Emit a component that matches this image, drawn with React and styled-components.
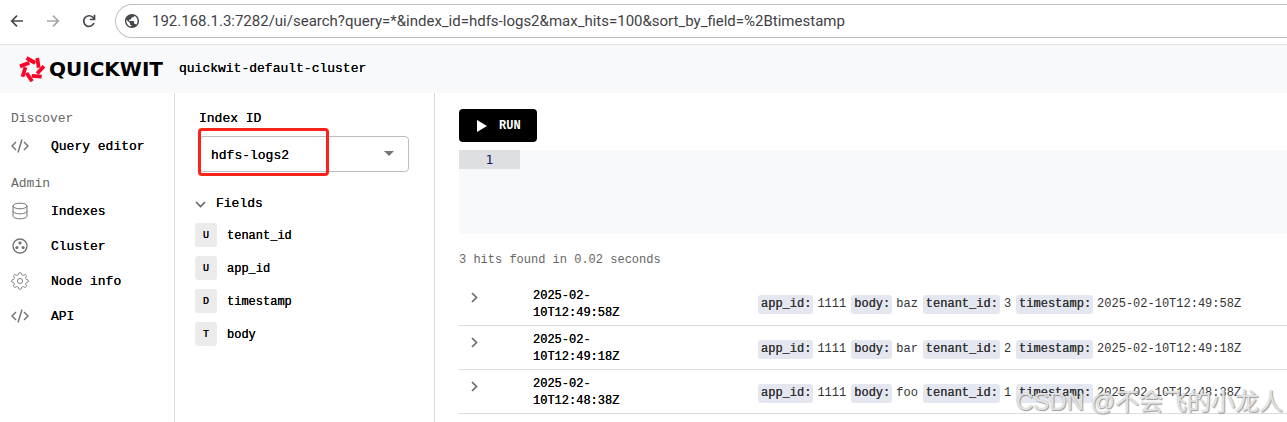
import React from 'react';
import styled, { createGlobalStyle } from 'styled-components';

const Global = createGlobalStyle`
  *, *::before, *::after { box-sizing: border-box; }
  html { overflow: hidden; }
  body {
    margin: 0;
    background: #fff;
    color: #000;
    font: 13px/24px "Liberation Mono", monospace;
  }
  button, select, textarea { font: inherit; color: inherit; border: 0; margin: 0; }
  ul, dl, dd, h2 { margin: 0; padding: 0; font: inherit; list-style: none; }
  a { color: inherit; text-decoration: none; }
  svg { display: block; flex: none; }
`;

const Page = styled.div`
  position: relative;
  display: flex;
  flex-direction: column;
  min-height: 100vh;
  overflow: hidden;
`;

const BrowserBar = styled.div`
  display: flex;
  align-items: center;
  padding: 4px 0 6px 8px;
  border-bottom: 1px solid #dfe1dd;
`;

const NavButton = styled.button`
  width: 18px;
  height: 18px;
  padding: 0;
  background: none;
  && {
    margin-right: 18px;
    color: ${(p) => (p.$dim ? '#a5a8ab' : '#45484c')};
  }
`;

const AddressBox = styled.div`
  flex: 1;
  display: flex;
  align-items: center;
  gap: 13px;
  height: 34px;
  margin-left: -1px;
  padding-left: 9px;
  border: 1px solid #bfc1c3;
  border-right: 0;
  border-radius: 17px 0 0 17px;
`;

const Address = styled.input`
  flex: 1;
  min-width: 0;
  padding: 0;
  border: 0;
  background: none;
  color: #3f4246;
  font: 15px/20px Roboto, sans-serif;
`;

const Header = styled.header`
  display: flex;
  align-items: center;
  height: 48px;
  padding-left: 18px;
  background: #f8f9fb;
`;

const Brand = styled.a`
  display: flex;
  align-items: center;
  gap: 4px;
  font: 700 20px/24px "DejaVu Sans", sans-serif;
`;

const Medium = styled.span`
  text-shadow: 0 0 0 currentColor;
`;

const Cluster = styled(Medium)`
  margin-left: 16px;
`;

const Body = styled.div`
  flex: 1;
  display: flex;
`;

const Sidebar = styled.nav`
  flex: none;
  width: 175px;
  padding: 14px 0 0 11px;
  border-right: 1px solid #dcdcdc;
`;

const NavGroup = styled.section`
  margin-bottom: 8px;
`;

const NavTitle = styled.h2`
  height: 22px;
  color: #666;
`;

const NavItem = styled.a`
  display: flex;
  align-items: center;
  gap: 22px;
  height: 35px;
  svg { color: #757575; margin-bottom: 2px; }
`;

const FieldPanel = styled.aside`
  flex: none;
  width: 260px;
  padding: 14px 25px 0 20px;
  border-right: 1px solid #dcdcdc;
`;

const IndexPicker = styled.div`
  position: relative;
  display: flex;
  flex-direction: column;
  gap: 5px;
  padding-left: 4px;
`;

const IndexSelect = styled.select`
  width: 100%;
  height: 36px;
  appearance: none;
  background: #fff;
  text-shadow: 0 0 0 currentColor;
  && {
    padding: 3px 0 0 11px;
    border: 1px solid #bdbdbd;
  }
  border-radius: 4px;
`;

const SelectArrow = styled.svg`
  position: absolute;
  right: 15px;
  bottom: 16px;
  pointer-events: none;
`;

const Highlight = styled.div`
  position: absolute;
  left: 3px;
  bottom: -4px;
  width: 131px;
  height: 48px;
  border: 3px solid #fa2319;
  border-radius: 4px;
  pointer-events: none;
`;

const FieldsToggle = styled.button`
  display: flex;
  align-items: center;
  gap: 10px;
  padding: 0;
  background: none;
  text-shadow: 0 0 0 currentColor;
  && { margin: 20px 0 7px; }
`;

const FieldList = styled.ul`
  display: flex;
  flex-direction: column;
  gap: 9px;
`;

const Field = styled.li`
  display: flex;
  align-items: flex-start;
  gap: 10px;
  height: 24px;
  font-size: 12px;
  line-height: 26px;
`;

const TypeBadge = styled.span`
  width: 22px;
  height: 24px;
  border-radius: 3px;
  background: #ebebeb;
  font-size: 10px;
  text-align: center;
  text-shadow: 0 0 0 currentColor;
`;

const Main = styled.main`
  flex: 1;
  min-width: 0;
  padding: 16px 0 0 24px;
`;

const RunButton = styled.button`
  display: flex;
  align-items: center;
  gap: 12px;
  height: 33px;
  padding: 1px 16px 0 18px;
  border-radius: 4px;
  && { background: #000; color: #fff; font: 700 12px/20px "Liberation Mono", monospace; }
`;

const Editor = styled.div`
  display: flex;
  height: 84px;
  margin: 8px 0 17px;
  background: #f8f9fb;
`;

const Gutter = styled.div`
  width: 61px;
  height: 19px;
  background: #dedfe1;
  color: #0b216f;
  font: 13px/19px "DejaVu Sans Mono", monospace;
  text-align: center;
`;

const QueryInput = styled.textarea`
  flex: 1;
  padding: 0 8px;
  background: none;
  resize: none;
  outline: 0;
`;

const HitCount = styled.div`
  margin-bottom: 12px;
  color: #666;
  font-size: 12px;
  line-height: 18px;
`;

const Results = styled.table`
  width: 100%;
  table-layout: fixed;
  border-collapse: collapse;
  font-size: 12px;
  line-height: 17px;
`;

const Cell = styled.td`
  width: ${(p) => p.$w || 'auto'};
  height: 44px;
  padding: ${(p) => (p.$align ? 0 : 4)}px 0 0;
  vertical-align: ${(p) => p.$align || 'middle'};
  border-bottom: 1px solid #dcdcdc;
`;

const ExpandButton = styled.button`
  display: block;
  padding: 11px 10px 10px;
  background: none;
  color: #666;
`;

const Doc = styled.dl`
  display: flex;
  line-height: 19px;
  white-space: nowrap;
  color: #333;
`;

const Key = styled.dt`
  margin-right: 4px;
  padding: 0 2px 0 3px;
  border-radius: 3px;
  background: #e4e7f0;
  text-shadow: 0 0 0 currentColor;
`;

const Value = styled.dd`
  && { margin-right: 5px; }
`;

const Watermark = styled.div`
  position: absolute;
  right: 4px;
  bottom: 4px;
  color: rgba(255, 255, 255, 0.7);
  font: 24px/32px "Liberation Sans", "Noto Sans CJK SC", sans-serif;
  text-shadow: 1px 1px 1px #999, 0 0 1px #aaa;
  white-space: nowrap;
  pointer-events: none;
`;

const Arrow = ({ flip }) => (
  <svg width="18" height="18" viewBox="0 0 18 18" fill="none" stroke="currentColor" strokeWidth="1.7">
    <path d={flip ? 'M3 9h11M9 3.7 14.3 9 9 14.3' : 'M15 9H4M9 3.7 3.7 9 9 14.3'} />
  </svg>
);

const Reload = () => (
  <svg width="18" height="18" viewBox="0 0 18 18" fill="none" stroke="currentColor" strokeWidth="1.7">
    <path d="M14 11a5.3 5.3 0 1 1-1.1-5.6L14.4 7" />
    <path d="M14.5 2.8v4.7h-4.7" />
  </svg>
);

const Globe = () => (
  <svg width="14" height="14" viewBox="2 2 20 20" fill="#45484c">
    <path d="M12 2C6.48 2 2 6.48 2 12s4.48 10 10 10 10-4.48 10-10S17.52 2 12 2zm-1 17.93c-3.95-.49-7-3.85-7-7.93 0-.62.08-1.21.21-1.79L9 15v1c0 1.1.9 2 2 2v1.93zm6.9-2.54c-.26-.81-1-1.39-1.9-1.39h-1v-3c0-.55-.45-1-1-1H8v-2h2c.55 0 1-.45 1-1V7h2c1.1 0 2-.9 2-2v-.41c2.93 1.19 5 4.06 5 7.41 0 2.08-.8 3.97-2.1 5.39z" />
  </svg>
);

const LogoMark = () => (
  <svg width="27" height="26" viewBox="-14 -13 27 26" stroke="#ff0026" strokeWidth="3.8">
    {[0, 1, 2, 3, 4, 5, 6].map((i) => (
      <path key={i} d="M-5.4-11 3.2-6" transform={`rotate(${(i * 360) / 7})`} />
    ))}
  </svg>
);

const CodeIcon = () => (
  <svg width="18" height="18" viewBox="0 0 18 18" fill="none" stroke="currentColor" strokeWidth="1.5">
    <path d="M5 5 1 9l4 4M13 5l4 4-4 4M11 2.5 7 15.5" />
  </svg>
);

const DatabaseIcon = () => (
  <svg width="18" height="18" viewBox="0 0 18 18" fill="none" stroke="currentColor">
    <ellipse cx="9" cy="4" rx="7" ry="2.8" />
    <path d="M2 4v10c0 1.5 3.1 2.8 7 2.8s7-1.3 7-2.8V4M2 9c0 1.5 3.1 2.8 7 2.8s7-1.3 7-2.8" />
  </svg>
);

const ClusterIcon = () => (
  <svg width="18" height="18" viewBox="0 0 18 18" fill="currentColor">
    <circle cx="9" cy="9" r="7" fill="none" stroke="currentColor" strokeWidth="1.4" />
    <circle cx="9" cy="5.9" r="1.6" />
    <circle cx="5.9" cy="10.6" r="1.6" />
    <circle cx="12.1" cy="10.6" r="1.6" />
  </svg>
);

const gearPath = () => {
  const points = [];
  for (let i = 0; i < 96; i += 1) {
    const a = (i / 96) * Math.PI * 2;
    const r = 7.3 + Math.max(-1, Math.min(1, 1.7 * Math.cos(8 * a)));
    points.push(`${(9 + r * Math.cos(a)).toFixed(2)} ${(9 + r * Math.sin(a)).toFixed(2)}`);
  }
  return `M${points.join('L')}Z`;
};

const GearIcon = () => (
  <svg width="18" height="18" viewBox="0 0 18 18" fill="none" stroke="currentColor" strokeWidth="0.9">
    <path d={gearPath()} />
    <circle cx="9" cy="9" r="2.6" />
  </svg>
);

const Chevron = ({ down }) => (
  <svg width="11" height="11" viewBox="0 0 11 11" fill="none" stroke="#666" strokeWidth="1.6">
    <path d={down ? 'M1 3l4.5 4.5L10 3' : 'M3 1l4.5 4.5L3 10'} />
  </svg>
);

const adminLinks = [
  ['Indexes', DatabaseIcon],
  ['Cluster', ClusterIcon],
  ['Node info', GearIcon],
  ['API', CodeIcon],
];

const fields = [
  ['U', 'tenant_id'],
  ['U', 'app_id'],
  ['D', 'timestamp'],
  ['T', 'body'],
];

const hits = [
  { body: 'baz', tenant: '3', day: '2025-02-', time: '10T12:49:58Z' },
  { body: 'bar', tenant: '2', day: '2025-02-', time: '10T12:49:18Z' },
  { body: 'foo', tenant: '1', day: '2025-02-', time: '10T12:48:38Z' },
];

const NavLink = ({ icon: Icon, children }) => (
  <NavItem href="#">
    <Icon />
    <Medium>{children}</Medium>
  </NavItem>
);

export default function App() {
  return (
    <Page>
      <Global />
      <BrowserBar>
        <NavButton aria-label="Back"><Arrow /></NavButton>
        <NavButton aria-label="Forward" $dim><Arrow flip /></NavButton>
        <NavButton aria-label="Reload"><Reload /></NavButton>
        <AddressBox>
          <Globe />
          <Address
            aria-label="Address"
            defaultValue="192.168.1.3:7282/ui/search?query=*&index_id=hdfs-logs2&max_hits=100&sort_by_field=%2Btimestamp"
          />
        </AddressBox>
      </BrowserBar>
      <Header>
        <Brand href="#"><LogoMark />QUICKWIT</Brand>
        <Cluster>quickwit-default-cluster</Cluster>
      </Header>
      <Body>
        <Sidebar>
          <NavGroup>
            <NavTitle>Discover</NavTitle>
            <NavLink icon={CodeIcon}>Query editor</NavLink>
          </NavGroup>
          <NavGroup>
            <NavTitle>Admin</NavTitle>
            {adminLinks.map(([label, icon]) => (
              <NavLink key={label} icon={icon}>{label}</NavLink>
            ))}
          </NavGroup>
        </Sidebar>
        <FieldPanel>
          <IndexPicker>
            <label htmlFor="index"><Medium>Index ID</Medium></label>
            <IndexSelect id="index" defaultValue="hdfs-logs2">
              <option>hdfs-logs2</option>
            </IndexSelect>
            <SelectArrow width="10" height="5" viewBox="0 0 10 5" fill="#757575">
              <path d="M0 0h10L5 5z" />
            </SelectArrow>
            <Highlight />
          </IndexPicker>
          <FieldsToggle><Chevron down />Fields</FieldsToggle>
          <FieldList>
            {fields.map(([type, name]) => (
              <Field key={name}>
                <TypeBadge>{type}</TypeBadge>
                <Medium>{name}</Medium>
              </Field>
            ))}
          </FieldList>
        </FieldPanel>
        <Main>
          <RunButton>
            <svg width="10" height="12" viewBox="0 0 10 12" fill="#fff"><path d="M0 0l10 6-10 6z" /></svg>
            RUN
          </RunButton>
          <Editor>
            <Gutter>1</Gutter>
            <QueryInput aria-label="Query" />
          </Editor>
          <HitCount>3 hits found in 0.02 seconds</HitCount>
          <Results>
            <tbody>
              {hits.map((hit) => (
                <tr key={hit.time}>
                  <Cell $w="74px" $align="top">
                    <ExpandButton aria-label="Expand"><Chevron /></ExpandButton>
                  </Cell>
                  <Cell $w="225px">
                    <Medium>{hit.day}<br />{hit.time}</Medium>
                  </Cell>
                  <Cell>
                    <Doc>
                      <Key>app_id:</Key><Value>1111</Value>
                      <Key>body:</Key><Value>{hit.body}</Value>
                      <Key>tenant_id:</Key><Value>{hit.tenant}</Value>
                      <Key>timestamp:</Key><Value>{hit.day}{hit.time}</Value>
                    </Doc>
                  </Cell>
                </tr>
              ))}
            </tbody>
          </Results>
        </Main>
      </Body>
      <Watermark>CSDN @不会飞的小龙人</Watermark>
    </Page>
  );
}
